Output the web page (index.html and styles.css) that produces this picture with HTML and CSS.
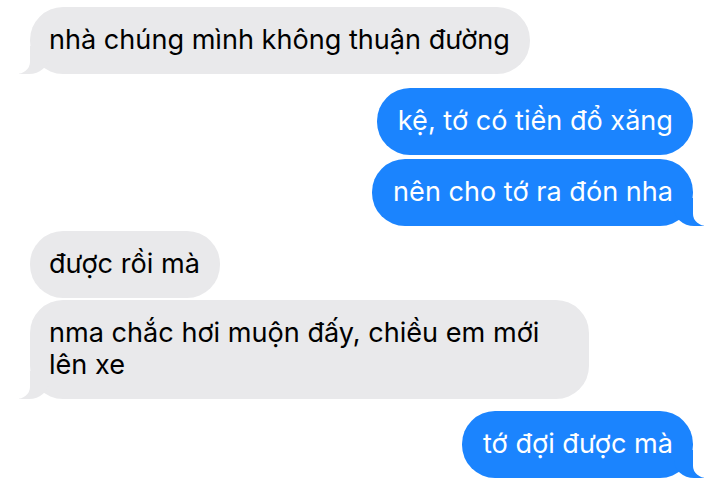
FILE: index.html
```html
<!DOCTYPE html>
<html lang="vi">
<head>
<meta charset="utf-8">
<title>Tin nhắn</title>
<link rel="stylesheet" href="styles.css">
</head>
<body>
<main class="thread">
  <div class="msg recv tail first">nhà chúng mình không thuận đường</div>
  <div class="msg sent gap-group">kệ, tớ có tiền đổ xăng</div>
  <div class="msg sent tail gap-small">nên cho tớ ra đón nha</div>
  <div class="msg recv gap-5">được rồi mà</div>
  <div class="msg recv tail gap-3">nma chắc hơi muộn đấy, chiều em mới lên xe</div>
  <div class="msg sent tail gap-last">tớ đợi được mà</div>
</main>
</body>
</html>
```
FILE: styles.css
```css
html, body {
  margin: 0;
  padding: 0;
  background: #ffffff;
}

.thread {
  width: 720px;
  height: 487px;
  box-sizing: border-box;
  padding: 7px 27px 0 30px;
  display: flex;
  flex-direction: column;
  overflow: hidden;
  font-family: Inter, "Liberation Sans", Arial, sans-serif;
  font-size: 27.1px;
  line-height: 32px;
}

.msg {
  position: relative;
  max-width: 520px;
  padding: 17px 20px 18px 19px;
  border-radius: 33px;
}

.recv {
  align-self: flex-start;
  background: #e9e9eb;
  color: #000000;
}

.sent {
  align-self: flex-end;
  background: #1b84fe;
  color: #ffffff;
  padding-left: 21px;
}

.first { margin-top: 0; }
.gap-group { margin-top: 14px; }
.gap-small { margin-top: 4px; }
.gap-5 { margin-top: 5px; }
.gap-3 { margin-top: 2px; }
.gap-last { margin-top: 12px; }

/* bubble tails */
.tail::before,
.tail::after {
  content: "";
  position: absolute;
  bottom: 0;
  height: 28px;
}

.recv.tail::before {
  left: -11px;
  width: 30px;
  background: #e9e9eb;
  border-bottom-right-radius: 20px 18px;
}

.recv.tail::after {
  left: -30px;
  width: 30px;
  background: #ffffff;
  border-bottom-right-radius: 14px 12px;
}

.sent.tail::before {
  right: -11px;
  width: 30px;
  background: #1b84fe;
  border-bottom-left-radius: 20px 18px;
}

.sent.tail::after {
  right: -30px;
  width: 30px;
  background: #ffffff;
  border-bottom-left-radius: 14px 12px;
}
```
